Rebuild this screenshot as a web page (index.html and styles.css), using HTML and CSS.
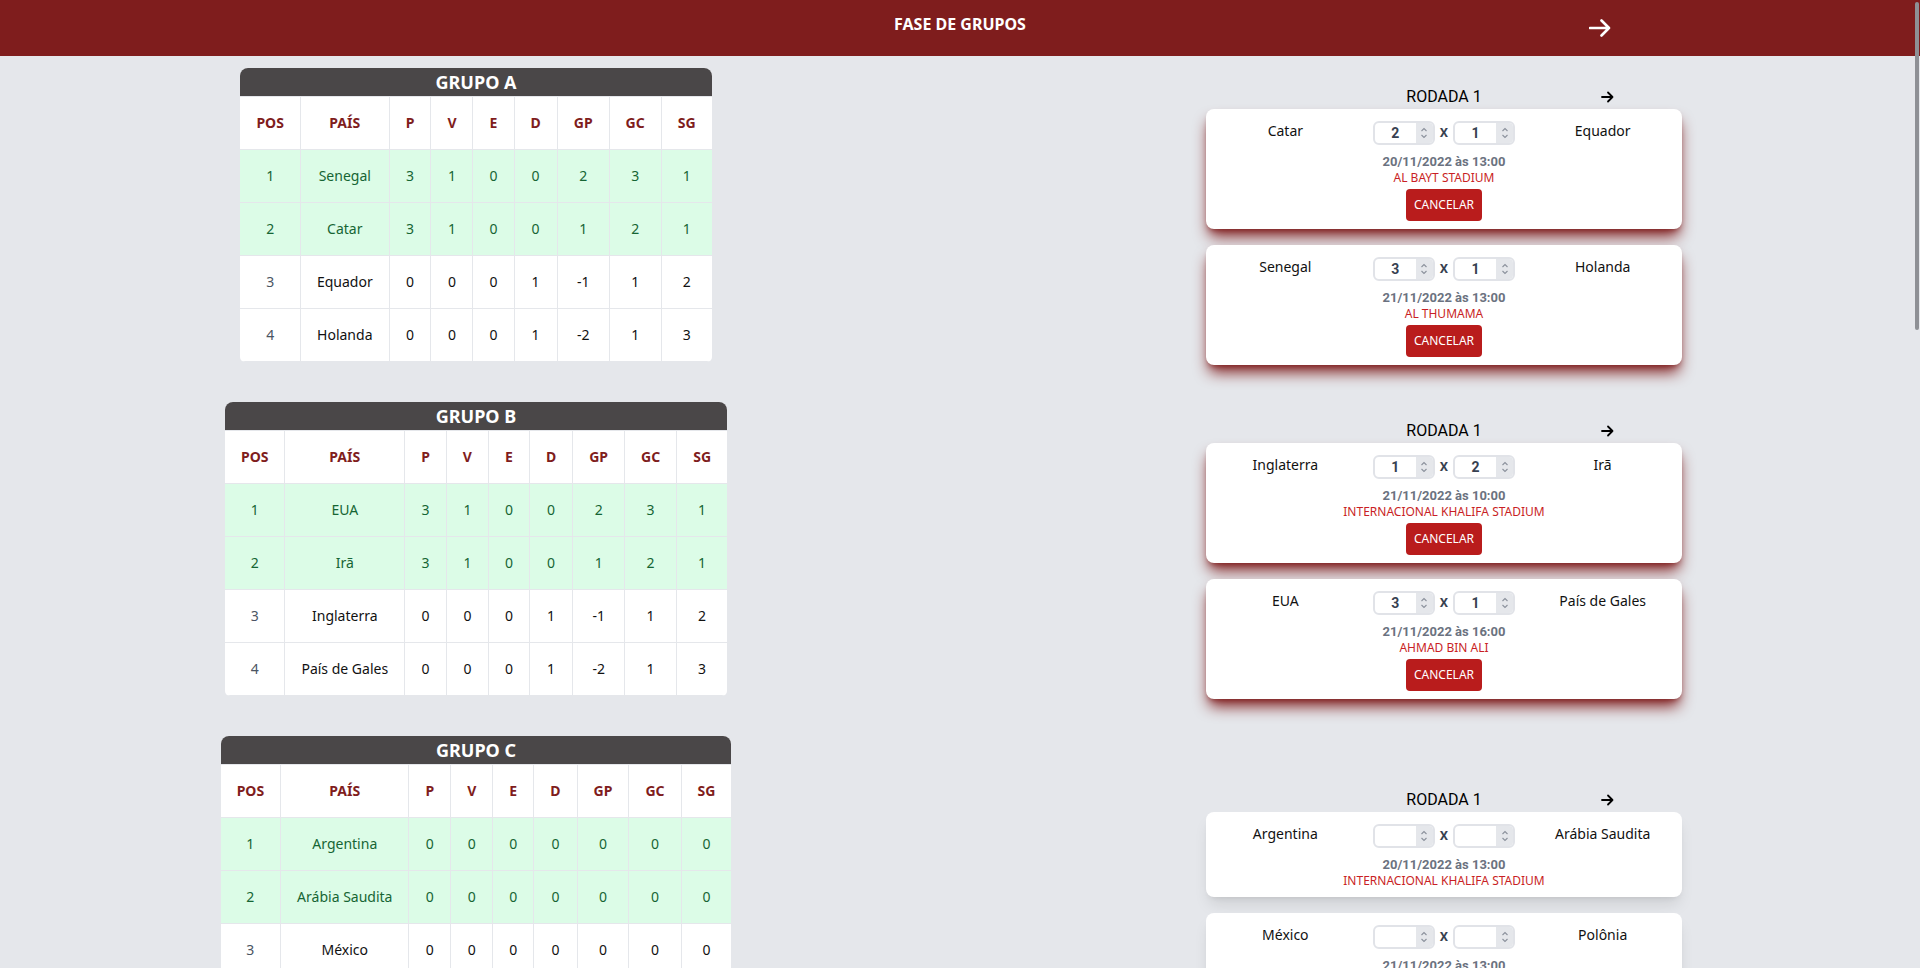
FILE: index.html
```html
<!DOCTYPE html>
<html lang="pt-BR">
<head>
<meta charset="utf-8">
<title>Fase de Grupos</title>
<link rel="stylesheet" href="styles.css">
</head>
<body>
<header class="topbar">
  <div></div>
  <h1>FASE DE GRUPOS</h1>
  <button class="topbar-next" aria-label="Próximo">
    <svg width="22" height="18" viewBox="0 0 22 18"><path d="M1 9H20M12.5 1.5L20 9L12.5 16.5" fill="none" stroke="#fff" stroke-width="2.6" stroke-linecap="round" stroke-linejoin="round"/></svg>
  </button>
</header>
<div class="scroll-thumb"></div>

<main>
  <!-- GRUPO A -->
  <section class="row">
    <div class="left">
      <div class="group">
        <div class="group-title">GRUPO A</div>
        <table>
          <thead><tr><th>POS</th><th>PAÍS</th><th>P</th><th>V</th><th>E</th><th>D</th><th>GP</th><th>GC</th><th>SG</th></tr></thead>
          <tbody>
            <tr class="q"><td>1</td><td>Senegal</td><td>3</td><td>1</td><td>0</td><td>0</td><td>2</td><td>3</td><td>1</td></tr>
            <tr class="q"><td>2</td><td>Catar</td><td>3</td><td>1</td><td>0</td><td>0</td><td>1</td><td>2</td><td>1</td></tr>
            <tr><td class="pos">3</td><td>Equador</td><td>0</td><td>0</td><td>0</td><td>1</td><td>-1</td><td>1</td><td>2</td></tr>
            <tr><td class="pos">4</td><td>Holanda</td><td>0</td><td>0</td><td>0</td><td>1</td><td>-2</td><td>1</td><td>3</td></tr>
          </tbody>
        </table>
      </div>
    </div>
    <div class="right">
      <div class="rodada">
        <div class="rodada-head"><div></div><div class="rodada-title">RODADA 1</div><button class="rodada-next" aria-label="Próxima rodada"><svg width="13" height="12" viewBox="0 0 13 12"><path d="M1 6H11.5M7 1.5L11.5 6L7 10.5" fill="none" stroke="#000" stroke-width="1.8" stroke-linecap="round" stroke-linejoin="round"/></svg></button></div>
        <div class="matches">
          <div class="match done">
            <div class="teams">
              <div class="team">Catar</div>
              <div class="score"><div class="num"><span class="val">2</span><span class="spin"><svg width="8" height="14" viewBox="0 0 8 14"><path d="M1.5 5L4 2.5L6.5 5M1.5 9L4 11.5L6.5 9" fill="none" stroke="#8b919c" stroke-width="1.1"/></svg></span></div><span class="vs">X</span><div class="num"><span class="val">1</span><span class="spin"><svg width="8" height="14" viewBox="0 0 8 14"><path d="M1.5 5L4 2.5L6.5 5M1.5 9L4 11.5L6.5 9" fill="none" stroke="#8b919c" stroke-width="1.1"/></svg></span></div></div>
              <div class="team">Equador</div>
            </div>
            <div class="info">
              <div class="date">20/11/2022 às 13:00</div>
              <div class="stadium">AL BAYT STADIUM</div>
              <button class="cancel">CANCELAR</button>
            </div>
          </div>
          <div class="match done">
            <div class="teams">
              <div class="team">Senegal</div>
              <div class="score"><div class="num"><span class="val">3</span><span class="spin"><svg width="8" height="14" viewBox="0 0 8 14"><path d="M1.5 5L4 2.5L6.5 5M1.5 9L4 11.5L6.5 9" fill="none" stroke="#8b919c" stroke-width="1.1"/></svg></span></div><span class="vs">X</span><div class="num"><span class="val">1</span><span class="spin"><svg width="8" height="14" viewBox="0 0 8 14"><path d="M1.5 5L4 2.5L6.5 5M1.5 9L4 11.5L6.5 9" fill="none" stroke="#8b919c" stroke-width="1.1"/></svg></span></div></div>
              <div class="team">Holanda</div>
            </div>
            <div class="info">
              <div class="date">21/11/2022 às 13:00</div>
              <div class="stadium">AL THUMAMA</div>
              <button class="cancel">CANCELAR</button>
            </div>
          </div>
        </div>
      </div>
    </div>
  </section>

  <!-- GRUPO B -->
  <section class="row">
    <div class="left">
      <div class="group">
        <div class="group-title">GRUPO B</div>
        <table>
          <thead><tr><th>POS</th><th>PAÍS</th><th>P</th><th>V</th><th>E</th><th>D</th><th>GP</th><th>GC</th><th>SG</th></tr></thead>
          <tbody>
            <tr class="q"><td>1</td><td>EUA</td><td>3</td><td>1</td><td>0</td><td>0</td><td>2</td><td>3</td><td>1</td></tr>
            <tr class="q"><td>2</td><td>Irã</td><td>3</td><td>1</td><td>0</td><td>0</td><td>1</td><td>2</td><td>1</td></tr>
            <tr><td class="pos">3</td><td>Inglaterra</td><td>0</td><td>0</td><td>0</td><td>1</td><td>-1</td><td>1</td><td>2</td></tr>
            <tr><td class="pos">4</td><td>País de Gales</td><td>0</td><td>0</td><td>0</td><td>1</td><td>-2</td><td>1</td><td>3</td></tr>
          </tbody>
        </table>
      </div>
    </div>
    <div class="right">
      <div class="rodada">
        <div class="rodada-head"><div></div><div class="rodada-title">RODADA 1</div><button class="rodada-next" aria-label="Próxima rodada"><svg width="13" height="12" viewBox="0 0 13 12"><path d="M1 6H11.5M7 1.5L11.5 6L7 10.5" fill="none" stroke="#000" stroke-width="1.8" stroke-linecap="round" stroke-linejoin="round"/></svg></button></div>
        <div class="matches">
          <div class="match done">
            <div class="teams">
              <div class="team">Inglaterra</div>
              <div class="score"><div class="num"><span class="val">1</span><span class="spin"><svg width="8" height="14" viewBox="0 0 8 14"><path d="M1.5 5L4 2.5L6.5 5M1.5 9L4 11.5L6.5 9" fill="none" stroke="#8b919c" stroke-width="1.1"/></svg></span></div><span class="vs">X</span><div class="num"><span class="val">2</span><span class="spin"><svg width="8" height="14" viewBox="0 0 8 14"><path d="M1.5 5L4 2.5L6.5 5M1.5 9L4 11.5L6.5 9" fill="none" stroke="#8b919c" stroke-width="1.1"/></svg></span></div></div>
              <div class="team">Irã</div>
            </div>
            <div class="info">
              <div class="date">21/11/2022 às 10:00</div>
              <div class="stadium">INTERNACIONAL KHALIFA STADIUM</div>
              <button class="cancel">CANCELAR</button>
            </div>
          </div>
          <div class="match done">
            <div class="teams">
              <div class="team">EUA</div>
              <div class="score"><div class="num"><span class="val">3</span><span class="spin"><svg width="8" height="14" viewBox="0 0 8 14"><path d="M1.5 5L4 2.5L6.5 5M1.5 9L4 11.5L6.5 9" fill="none" stroke="#8b919c" stroke-width="1.1"/></svg></span></div><span class="vs">X</span><div class="num"><span class="val">1</span><span class="spin"><svg width="8" height="14" viewBox="0 0 8 14"><path d="M1.5 5L4 2.5L6.5 5M1.5 9L4 11.5L6.5 9" fill="none" stroke="#8b919c" stroke-width="1.1"/></svg></span></div></div>
              <div class="team">País de Gales</div>
            </div>
            <div class="info">
              <div class="date">21/11/2022 às 16:00</div>
              <div class="stadium">AHMAD BIN ALI</div>
              <button class="cancel">CANCELAR</button>
            </div>
          </div>
        </div>
      </div>
    </div>
  </section>

  <!-- GRUPO C -->
  <section class="row">
    <div class="left">
      <div class="group">
        <div class="group-title">GRUPO C</div>
        <table>
          <thead><tr><th>POS</th><th>PAÍS</th><th>P</th><th>V</th><th>E</th><th>D</th><th>GP</th><th>GC</th><th>SG</th></tr></thead>
          <tbody>
            <tr class="q"><td>1</td><td>Argentina</td><td>0</td><td>0</td><td>0</td><td>0</td><td>0</td><td>0</td><td>0</td></tr>
            <tr class="q"><td>2</td><td>Arábia Saudita</td><td>0</td><td>0</td><td>0</td><td>0</td><td>0</td><td>0</td><td>0</td></tr>
            <tr><td class="pos">3</td><td>México</td><td>0</td><td>0</td><td>0</td><td>0</td><td>0</td><td>0</td><td>0</td></tr>
            <tr><td class="pos">4</td><td>Polônia</td><td>0</td><td>0</td><td>0</td><td>0</td><td>0</td><td>0</td><td>0</td></tr>
          </tbody>
        </table>
      </div>
    </div>
    <div class="right">
      <div class="rodada">
        <div class="rodada-head"><div></div><div class="rodada-title">RODADA 1</div><button class="rodada-next" aria-label="Próxima rodada"><svg width="13" height="12" viewBox="0 0 13 12"><path d="M1 6H11.5M7 1.5L11.5 6L7 10.5" fill="none" stroke="#000" stroke-width="1.8" stroke-linecap="round" stroke-linejoin="round"/></svg></button></div>
        <div class="matches">
          <div class="match open">
            <div class="teams">
              <div class="team">Argentina</div>
              <div class="score"><div class="num"><span class="val"></span><span class="spin"><svg width="8" height="14" viewBox="0 0 8 14"><path d="M1.5 5L4 2.5L6.5 5M1.5 9L4 11.5L6.5 9" fill="none" stroke="#8b919c" stroke-width="1.1"/></svg></span></div><span class="vs">X</span><div class="num"><span class="val"></span><span class="spin"><svg width="8" height="14" viewBox="0 0 8 14"><path d="M1.5 5L4 2.5L6.5 5M1.5 9L4 11.5L6.5 9" fill="none" stroke="#8b919c" stroke-width="1.1"/></svg></span></div></div>
              <div class="team">Arábia Saudita</div>
            </div>
            <div class="info">
              <div class="date">20/11/2022 às 13:00</div>
              <div class="stadium">INTERNACIONAL KHALIFA STADIUM</div>
            </div>
          </div>
          <div class="match open">
            <div class="teams">
              <div class="team">México</div>
              <div class="score"><div class="num"><span class="val"></span><span class="spin"><svg width="8" height="14" viewBox="0 0 8 14"><path d="M1.5 5L4 2.5L6.5 5M1.5 9L4 11.5L6.5 9" fill="none" stroke="#8b919c" stroke-width="1.1"/></svg></span></div><span class="vs">X</span><div class="num"><span class="val"></span><span class="spin"><svg width="8" height="14" viewBox="0 0 8 14"><path d="M1.5 5L4 2.5L6.5 5M1.5 9L4 11.5L6.5 9" fill="none" stroke="#8b919c" stroke-width="1.1"/></svg></span></div></div>
              <div class="team">Polônia</div>
            </div>
            <div class="info">
              <div class="date">21/11/2022 às 13:00</div>
              <div class="stadium">ESTÁDIO 974</div>
            </div>
          </div>
        </div>
      </div>
    </div>
  </section>
</main>
</body>
</html>
```

FILE: styles.css
```css
* { box-sizing: border-box; }

html { scrollbar-width: none; }
html::-webkit-scrollbar { display: none; }

body {
  margin: 0;
  background: #e5e7eb;
  font-family: "Noto Sans", "Open Sans", sans-serif;
  color: #111;
}

button { cursor: pointer; font-family: inherit; }

/* top bar */
.topbar {
  background: #7f1d1d;
  height: 56px;
  padding: 12px 0;
  display: grid;
  grid-template-columns: repeat(3, 1fr);
  color: #fff;
}
.topbar h1 {
  margin: 0;
  font-size: 16px;
  line-height: 24px;
  font-weight: 700;
  text-align: center;
}
.topbar-next {
  justify-self: center;
  height: 32px;
  display: flex;
  align-items: center;
  background: none;
  border: 0;
  padding: 0;
}

.scroll-thumb {
  position: fixed;
  top: 2px;
  right: 1px;
  width: 4px;
  height: 328px;
  border-radius: 2px;
  background: #8e9095;
}

/* layout */
.row {
  display: grid;
  grid-template-columns: 952px 952px;
  column-gap: 16px;
  align-items: center;
}
.left {
  display: flex;
  justify-content: center;
  padding: 12px 0 28px;
}
.right {
  display: flex;
  justify-content: center;
  padding-top: 4px;
}

/* group tables */
.group {
  background: #fff;
  border-radius: 8px 8px 5px 5px;
  overflow: hidden;
}
.group-title {
  background: #4a4748;
  color: #fff;
  font-size: 18px;
  line-height: 28px;
  font-weight: 700;
  text-align: center;
}
table {
  border-collapse: collapse;
  font-size: 14px;
}
th, td {
  border: 1px solid #e5e7eb;
  padding: 16px;
  line-height: 20px;
  text-align: center;
  font-weight: 400;
}
tr > :first-child { border-left: 0; }
tr > :last-child { border-right: 0; }
th {
  color: #7f1d1d;
  font-weight: 700;
}
tr.q td {
  background: #dcfce7;
  color: #166534;
}
td.pos { color: #4b5563; }

/* rodadas */
.rodada { width: 476px; }
.rodada-head {
  display: grid;
  grid-template-columns: repeat(3, 1fr);
  height: 24px;
  align-items: center;
}
.rodada-title {
  font-family: Roboto, sans-serif;
  font-size: 16px;
  line-height: 24px;
  text-align: center;
  color: #000;
}
.rodada-next {
  justify-self: center;
  margin-left: 9px;
  background: none;
  border: 0;
  padding: 0;
  display: flex;
}
.matches {
  display: flex;
  flex-direction: column;
  gap: 16px;
}
.match {
  background: #fff;
  border-radius: 8px;
  padding: 12px 0 8px;
}
.match.done {
  box-shadow: 0 10px 15px -3px #7f1d1d, 0 4px 6px -4px #7f1d1d;
}
.match.open {
  box-shadow: 0 10px 15px -3px rgba(0,0,0,.1), 0 4px 6px -4px rgba(0,0,0,.1);
}
.teams {
  display: grid;
  grid-template-columns: repeat(3, 1fr);
  align-items: start;
}
.team {
  text-align: center;
  font-size: 14px;
  line-height: 20px;
  color: #111;
}
.score {
  display: flex;
  align-items: center;
  justify-content: center;
  gap: 5px;
}
.num {
  width: 62px;
  height: 24px;
  border: 2px solid #e1e3e8;
  border-radius: 6px;
  display: flex;
  align-items: stretch;
  overflow: hidden;
}
.val {
  flex: 1;
  text-align: center;
  font-family: Roboto, sans-serif;
  font-weight: 700;
  font-size: 14px;
  line-height: 20px;
  color: #374151;
}
.spin {
  width: 17px;
  background: #e5e7eb;
  display: flex;
  align-items: center;
  justify-content: center;
}
.vs {
  font-family: Roboto, sans-serif;
  font-weight: 700;
  font-size: 13px;
  line-height: 20px;
  color: #374151;
}
.info {
  margin-top: 9px;
  display: flex;
  flex-direction: column;
  align-items: center;
  text-align: center;
}
.date {
  font-family: Roboto, sans-serif;
  font-weight: 700;
  font-size: 13px;
  line-height: 16px;
  color: #6b7280;
}
.stadium {
  font-size: 12px;
  line-height: 16px;
  color: #c91f25;
}
.cancel {
  margin-top: 3px;
  background: #b91c1c;
  color: #fff;
  border: 0;
  border-radius: 4px;
  padding: 8px;
  font-size: 12px;
  line-height: 16px;
}
```
